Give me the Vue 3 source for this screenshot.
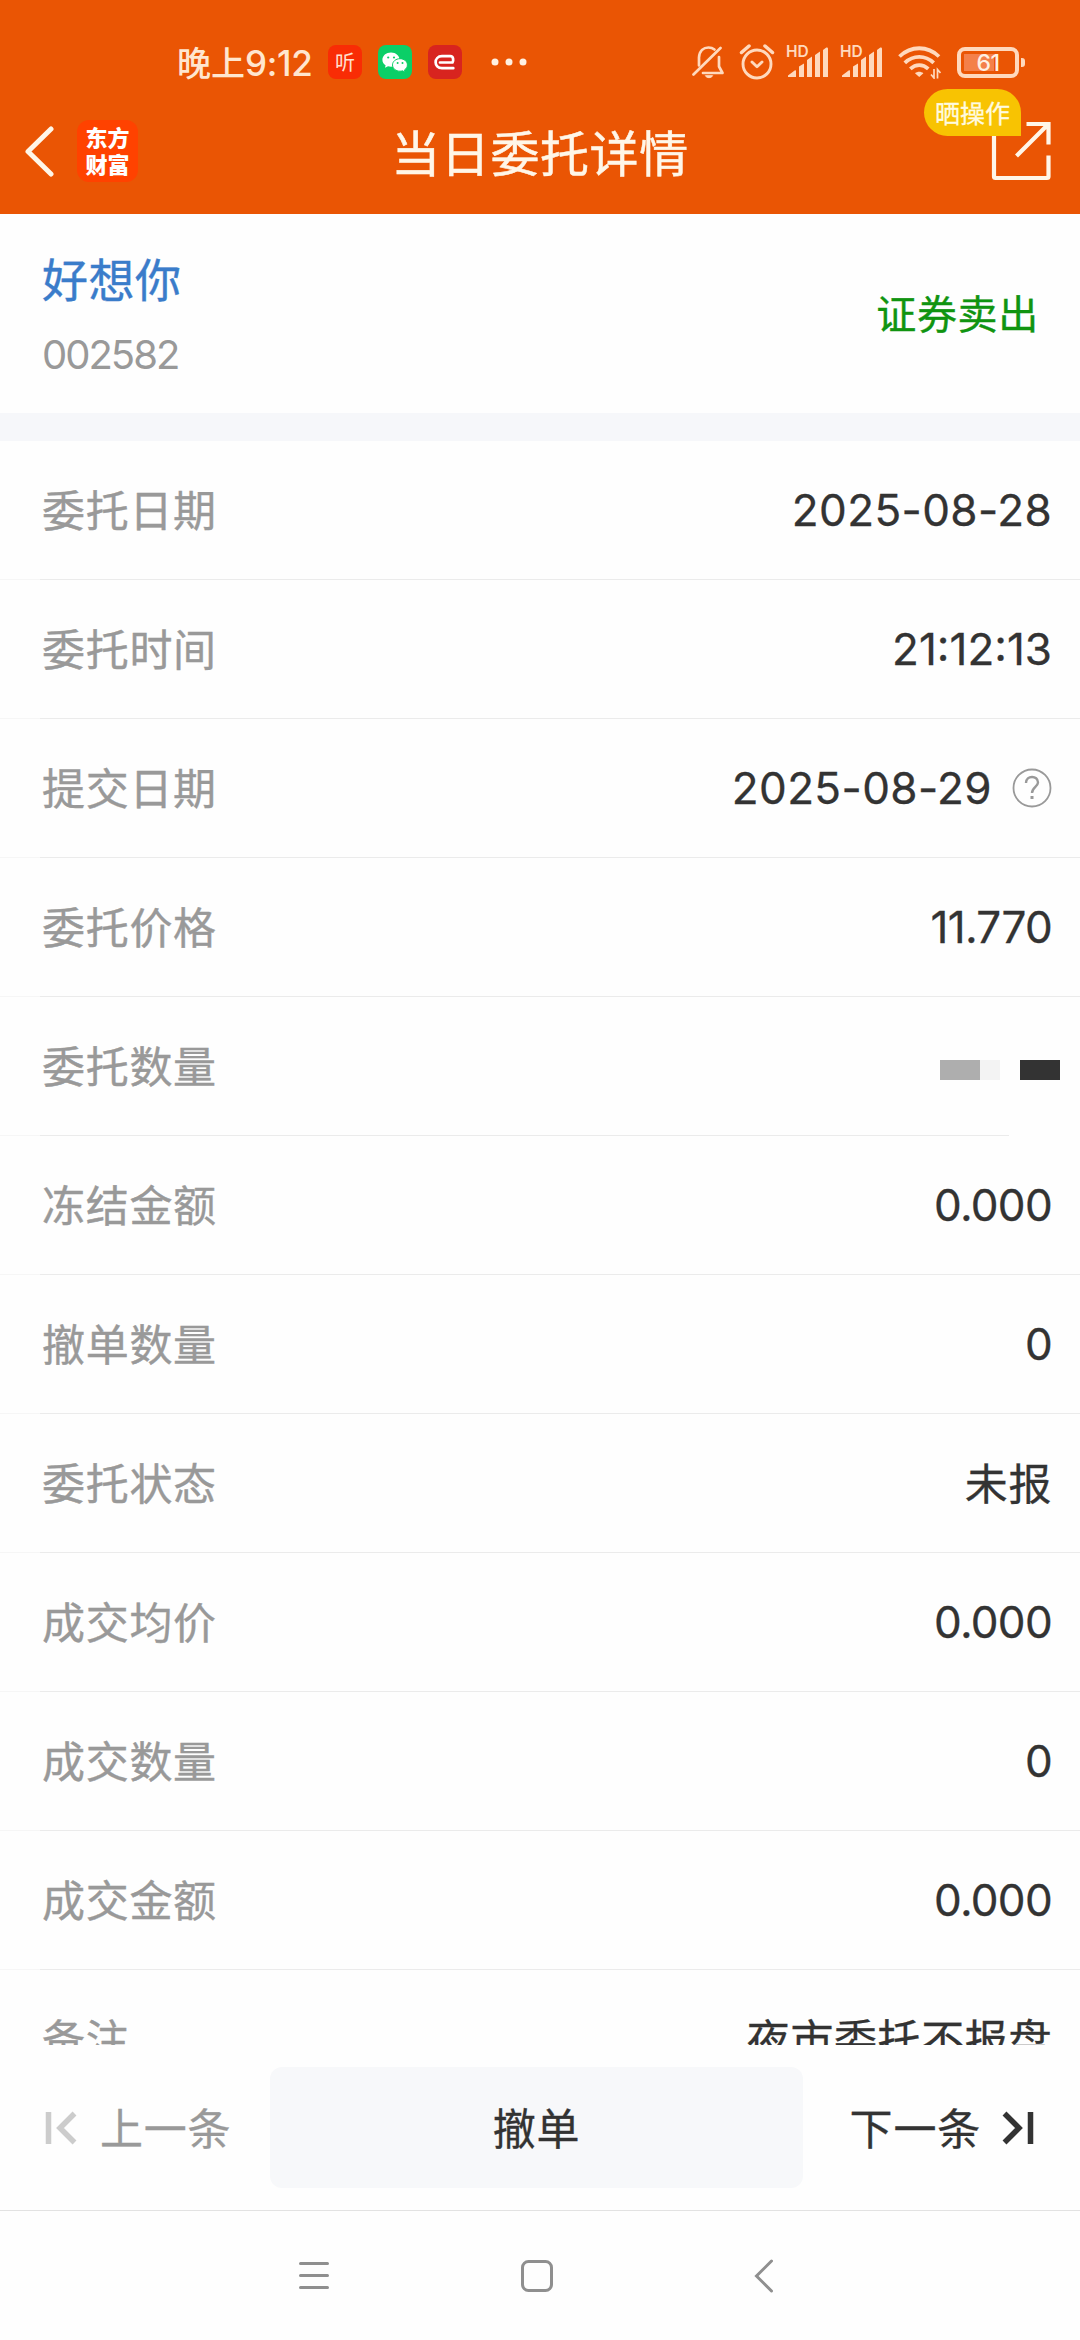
<template>
  <div class="page">
    <header class="top">
      <div class="status">
        <span class="time">晚上<b>9:12</b></span>
        <span class="app app-ting">听</span>
        <span class="app app-wechat">
          <svg width="34" height="34" viewBox="0 0 34 34">
            <path d="M13 7.500c-4.900 0-8.600 3.200-8.600 7.200 0 2.300 1.200 4.200 3.200 5.500l-.6 2.600 3-1.500c1 .3 2 .4 3 .4 4.900 0 8.600-3.100 8.600-7s-3.700-7.200-8.600-7.200z" fill="#fff" />
            <path d="M22 13.700c-4.200 0-7.500 2.800-7.500 6.200s3.300 6.300 7.500 6.300c.9 0 1.700-.1 2.500-.4l2.600 1.400-.6-2.300c1.800-1.200 2.900-2.900 2.900-5 0-3.400-3.200-6.200-7.400-6.200z" fill="#fff" stroke="#0bcf67" stroke-width="1" />
            <g fill="#0bcf67">
              <circle cx="10.200" cy="12.500" r="1.100" />
              <circle cx="16" cy="12.500" r="1.100" />
              <circle cx="19.600" cy="18" r="1" />
              <circle cx="24.500" cy="18" r="1" />
            </g>
          </svg>
        </span>
        <span class="app app-e">
          <svg width="34" height="34" viewBox="0 0 34 34" fill="none" stroke="#fff" stroke-width="2.700" stroke-linecap="round" stroke-linejoin="round">
            <path d="M12 17.500h12.500c1-1.500 1.300-6.300-2.200-6.300H14c-8.500 0-8.500 12 0 12h11.300" />
          </svg>
        </span>
        <svg class="more" width="36" height="8" viewBox="0 0 36 8" fill="#fff1e2">
          <circle cx="4" cy="4" r="3.500" />
          <circle cx="18" cy="4" r="3.500" />
          <circle cx="32" cy="4" r="3.500" />
        </svg>

        <div class="status-right">
          <svg class="bell" width="32" height="34" viewBox="0 0 32 34" fill="none" stroke="#ffd9bd" stroke-width="2.700" stroke-linecap="round" stroke-linejoin="round">
            <path d="M1.500 29.500 28.500 3" />
            <path d="M7 20.500V12.500C7.500 6 11.500 2.500 16.500 2.500c2.500 0 4.500.8 6 2" />
            <path d="M27 12v9.500l3.500 6.500H11" />
            <path d="M13.500 31c1.500 2.300 5.500 2.300 7 0z" fill="#ffd9bd" stroke-width="1" />
          </svg>
          <svg class="alarm" width="36" height="36" viewBox="0 0 36 36" fill="none" stroke="#ffd9bd" stroke-width="2.900" stroke-linecap="round" stroke-linejoin="round">
            <circle cx="18" cy="20" r="14" />
            <path d="m13 18 5 4.700 5-4.700" />
            <path d="M2.500 8.500 10 2M33.500 8.500 26 2" stroke-width="3.500" />
          </svg>
          <div v-for="n in 2" :key="n" class="signal">
            <span class="hd">HD</span>
            <svg width="42" height="32" viewBox="0 0 42 32" fill="#ffd9bd">
              <path d="M1 31v-1.500l7-5.200c.5-.3 1 0 1 .5V31zM12 31V20.500l5-3V31zM20 31V14l5-3.500V31zM28 31V9l5-3.500V31zM36 31V4l3-2.300c.9-.6 2 0 2 1V31z" />
            </svg>
          </div>
          <svg class="wifi" width="43" height="34" viewBox="0 0 43 34" fill="none" stroke="#ffd9bd" stroke-width="3.800">
            <path d="M1.500 11.500c11.500-11 28-11 39.500 0" />
            <path d="M6.800 17.800c8.500-8 20.400-8 28.900 0" />
            <path d="M12.300 23.800c5.500-5 12.500-5 18 0" />
            <path d="m17 28.300 4.200 3.800 4.200-3.800c-2.500-2-5.900-2-8.400 0z" fill="#ffd9bd" stroke="none" />
            <path d="M36 24v9l-3-3.500M39.500 33.500v-9l3 3.500" stroke-width="1.700" />
          </svg>
          <div class="battery"><span>61</span></div>
        </div>
      </div>

      <div class="title-bar">
        <svg class="back" width="30" height="52" viewBox="0 0 30 52" fill="none" stroke="#fff6e8" stroke-width="5" stroke-linecap="round" stroke-linejoin="round">
          <path d="M27 4 4 26.500 27 49" />
        </svg>
        <div class="logo"><span>东方财富</span></div>
        <h1>当日委托详情</h1>
        <div class="share">
          <svg width="62" height="62" viewBox="0 0 62 62" fill="none" stroke="#fff6e8" stroke-width="4.200">
            <path d="M4 14v42.500q0 1.500 1.500 1.500H57q1.500 0 1.500-1.500V35.500" />
            <path d="M36.500 4h22v20.500M58 4.500 26.500 36" />
          </svg>
          <span class="tip">晒操作</span>
        </div>
      </div>
    </header>

    <section class="stock">
      <div>
        <div class="name">好想你</div>
        <div class="code">002582</div>
      </div>
      <div class="side">证券卖出</div>
    </section>

    <ul class="list">
      <li v-for="item in items" :key="item.label" :class="{ masked: item.masked }">
        <span class="label">{{ item.label }}</span>
        <span v-if="item.masked" class="mask"><i></i><i></i><i></i></span>
        <span v-else class="value" :class="item.type">{{ item.value }}</span>
        <svg v-if="item.help" class="help" width="40" height="40" viewBox="0 0 40 40" fill="none" stroke="#999">
          <circle cx="20" cy="20" r="18.500" stroke-width="1.800" />
          <path d="M14 15c0-8 12-8 12-.5 0 4-6 5-6 10.500" stroke-width="2.400" />
          <path d="M18.500 28h3v3h-3z" fill="#999" stroke="none" />
        </svg>
      </li>
    </ul>

    <footer class="actions">
      <div class="prev">
        <svg width="32" height="34" viewBox="0 0 32 34" fill="none" stroke="#ccc" stroke-width="5.500">
          <path d="M3.500 1v32M29.500 2.500 15 17l14.500 14.500" />
        </svg>
        <span>上一条</span>
      </div>
      <button><span>撤单</span></button>
      <div class="next">
        <span>下一条</span>
        <svg width="32" height="34" viewBox="0 0 32 34" fill="none" stroke="#333" stroke-width="5.500">
          <path d="M28.500 1v32M2.500 2.500 17 17 2.500 31.500" />
        </svg>
      </div>
    </footer>

    <nav class="sys">
      <svg width="32" height="34" viewBox="0 0 32 34" fill="none" stroke="#8f8f8f" stroke-width="3" stroke-linecap="round">
        <path d="M2.500 4.500h27M2.500 16.500h27M2.500 28.500h27" />
      </svg>
      <svg width="34" height="34" viewBox="0 0 34 34" fill="none" stroke="#8f8f8f" stroke-width="3">
        <rect x="2.500" y="2.500" width="29" height="29" rx="6" />
      </svg>
      <svg width="20" height="34" viewBox="0 0 20 34" fill="none" stroke="#8f8f8f" stroke-width="3" stroke-linecap="round">
        <path d="M17.500 2 2.500 17l15 15" />
      </svg>
    </nav>
  </div>
</template>

<script setup>
const items = [
  { label: '委托日期', value: '2025-08-28', type: 'date' },
  { label: '委托时间', value: '21:12:13', type: 'time-value' },
  { label: '提交日期', value: '2025-08-29', type: 'date', help: true },
  { label: '委托价格', value: '11.770' },
  { label: '委托数量', masked: true },
  { label: '冻结金额', value: '0.000' },
  { label: '撤单数量', value: '0' },
  { label: '委托状态', value: '未报', type: 'cn' },
  { label: '成交均价', value: '0.000' },
  { label: '成交数量', value: '0' },
  { label: '成交金额', value: '0.000' },
  { label: '备注', value: '夜市委托不报盘', type: 'cn' }
]
</script>

<style>
body {
  margin: 0;
  background: #fefefe;
}
</style>

<style scoped>
.page {
  display: flex;
  flex-direction: column;
  width: 1080px;
  height: 2340px;
  overflow: hidden;
  background: #fefefe;
  color: #333;
  font-family: "Noto Sans CJK SC", sans-serif;
}

.top {
  height: 214px;
  background: #ea5504;
}

.status {
  display: flex;
  align-items: center;
  box-sizing: border-box;
  height: 92px;
  padding: 32px 61px 0 177px;
}

.time {
  width: 151px;
  font-size: 34px;
  font-weight: 500;
  line-height: 60px;
  color: #ffe6cf;
  white-space: nowrap;
}

.time b {
  font-family: Inter, sans-serif;
  font-size: 35px;
  font-weight: 500;
  letter-spacing: -0.3px;
}

.app {
  display: flex;
  align-items: center;
  justify-content: center;
  width: 34px;
  height: 34px;
  margin-right: 16px;
  border-radius: 8px;
}

.app-ting {
  background: #f92c05;
  color: #ffe0d0;
  font-size: 20px;
  line-height: 32px;
}

.app-wechat {
  background: #0bcf67;
}

.app-e {
  background: #d8241f;
}

.more {
  margin-left: 13px;
}

.status-right {
  display: flex;
  align-items: center;
  margin-left: auto;
}

.alarm {
  margin-left: 15px;
}

.signal {
  position: relative;
  width: 42px;
  height: 32px;
  margin-left: 12px;
}

.hd {
  position: absolute;
  left: -1px;
  top: -2px;
  color: #ffd9bd;
  font: 600 15.500px/15px Inter, sans-serif;
}

.wifi {
  margin-left: 15px;
}

.battery {
  position: relative;
  box-sizing: border-box;
  width: 62px;
  height: 31px;
  margin-left: 16px;
  padding: 3px;
  border: 4px solid #ffd9bd;
  border-radius: 8px;
  background: linear-gradient(#f4804a, #f4804a) 3px 3px / 30px 17px no-repeat;
}

.battery span {
  display: block;
  color: #fff0e2;
  font: 500 23px/18px Inter, sans-serif;
  letter-spacing: -0.5px;
  text-align: center;
}

.battery::after {
  content: "";
  position: absolute;
  right: -10px;
  top: 7px;
  width: 4px;
  height: 9px;
  border-radius: 0 3px 3px 0;
  background: #ffd9bd;
}

.title-bar {
  display: flex;
  align-items: center;
  height: 122px;
  padding: 0 28px 0 24px;
}

.back {
  margin-top: -4px;
}

.logo {
  display: flex;
  align-items: center;
  justify-content: center;
  box-sizing: border-box;
  width: 61px;
  height: 62px;
  margin: -4px 0 0 23px;
  padding-bottom: 3px;
  border-radius: 12px;
  background: #ff4200;
  color: #fff;
  font-size: 22px;
  font-weight: 900;
  line-height: 27px;
}

.logo span {
  width: 44px;
}

h1 {
  flex: 1;
  margin: -6px 0 0 4px;
  color: #fff6e8;
  font-size: 49px;
  font-weight: 400;
  letter-spacing: 0.6px;
  text-align: center;
  -webkit-text-stroke: 0.5px;
}

.share {
  position: relative;
  width: 62px;
  height: 62px;
  margin: -4px 0 0 52px;
}

.tip {
  position: absolute;
  right: 31px;
  top: -31px;
  width: 97px;
  height: 47px;
  border-radius: 24px 24px 0 24px;
  background: #f8c302;
  color: #fffbe0;
  font-size: 25px;
  line-height: 46px;
  text-align: center;
  -webkit-text-stroke: 0.3px;
}

.stock {
  display: flex;
  align-items: center;
  justify-content: space-between;
  box-sizing: border-box;
  height: 227px;
  padding: 0 41px 0 42px;
  border-bottom: 28px solid #f6f7fa;
}

.name {
  margin-top: 4px;
  color: #3a7cca;
  font-size: 46px;
  line-height: 70px;
  letter-spacing: 0.5px;
  -webkit-text-stroke: 0.4px;
}

.code {
  margin-top: 8px;
  color: #999;
  font-family: Inter, sans-serif;
  font-size: 40px;
  line-height: 70px;
  letter-spacing: -2px;
}

.side {
  margin-top: -3px;
  color: #109410;
  font-size: 40px;
  letter-spacing: 0.7px;
  -webkit-text-stroke: 0.4px;
}

.list {
  height: 1604px;
  margin: 0;
  padding: 0;
  overflow: hidden;
  list-style: none;
}

.list li {
  display: flex;
  align-items: center;
  box-sizing: border-box;
  height: 139px;
  padding: 0 28px 0 42px;
  border-bottom: 1px solid;
  border-image: linear-gradient(90deg, #f6f6f6 41px, #ebebeb 41px) 1;
}

.list li.masked {
  border-image: linear-gradient(90deg, #f6f6f6 41px, #ebebeb 41px, #ebebeb 1008px, #fefefe 1008px) 1;
}

.label {
  flex: 1;
  padding-bottom: 4px;
  color: #999;
  font-size: 43px;
  letter-spacing: 0.7px;
  -webkit-text-stroke: 0.4px;
}

.value {
  font-family: Inter, "Noto Sans CJK SC", sans-serif;
  font-size: 44px;
  letter-spacing: -0.7px;
  -webkit-text-stroke: 0.3px;
}

.value.date {
  letter-spacing: 0.4px;
}

.value.time-value {
  letter-spacing: 0;
}

.value.cn {
  padding-bottom: 4px;
  font-family: "Noto Sans CJK SC", sans-serif;
  font-size: 43px;
  letter-spacing: 0.6px;
}

.help {
  margin-left: 20px;
}

.mask {
  display: flex;
  height: 20px;
  margin: 8px -8px 0 0;
}

.mask i {
  width: 40px;
  background: #aeaeae;
}

.mask i:nth-child(2) {
  width: 20px;
  margin-right: 20px;
  background: #f3f3f3;
}

.mask i:nth-child(3) {
  background: #333;
}

.actions {
  display: flex;
  align-items: center;
  box-sizing: border-box;
  height: 166px;
  padding: 0 46px 0 45px;
  border-bottom: 1px solid #e2e2e2;
  font-size: 43px;
  letter-spacing: 0.8px;
  -webkit-text-stroke: 0.3px;
}

.actions span {
  padding-bottom: 4px;
}

.prev,
.next {
  display: flex;
  align-items: center;
}

.prev {
  gap: 23px;
  width: 225px;
  color: #999;
}

.next {
  flex: 1;
  justify-content: flex-end;
  gap: 21px;
}

button {
  display: flex;
  align-items: center;
  justify-content: center;
  width: 533px;
  height: 121px;
  padding: 0;
  border: 0;
  border-radius: 12px;
  background: #f7f8fa;
  color: #333;
  font: inherit;
  letter-spacing: inherit;
}

.sys {
  display: flex;
  align-items: center;
  flex: 1;
  padding-left: 298px;
}

.sys svg + svg {
  margin-left: 190px;
}

.sys svg:last-child {
  margin-left: 200px;
}
</style>
